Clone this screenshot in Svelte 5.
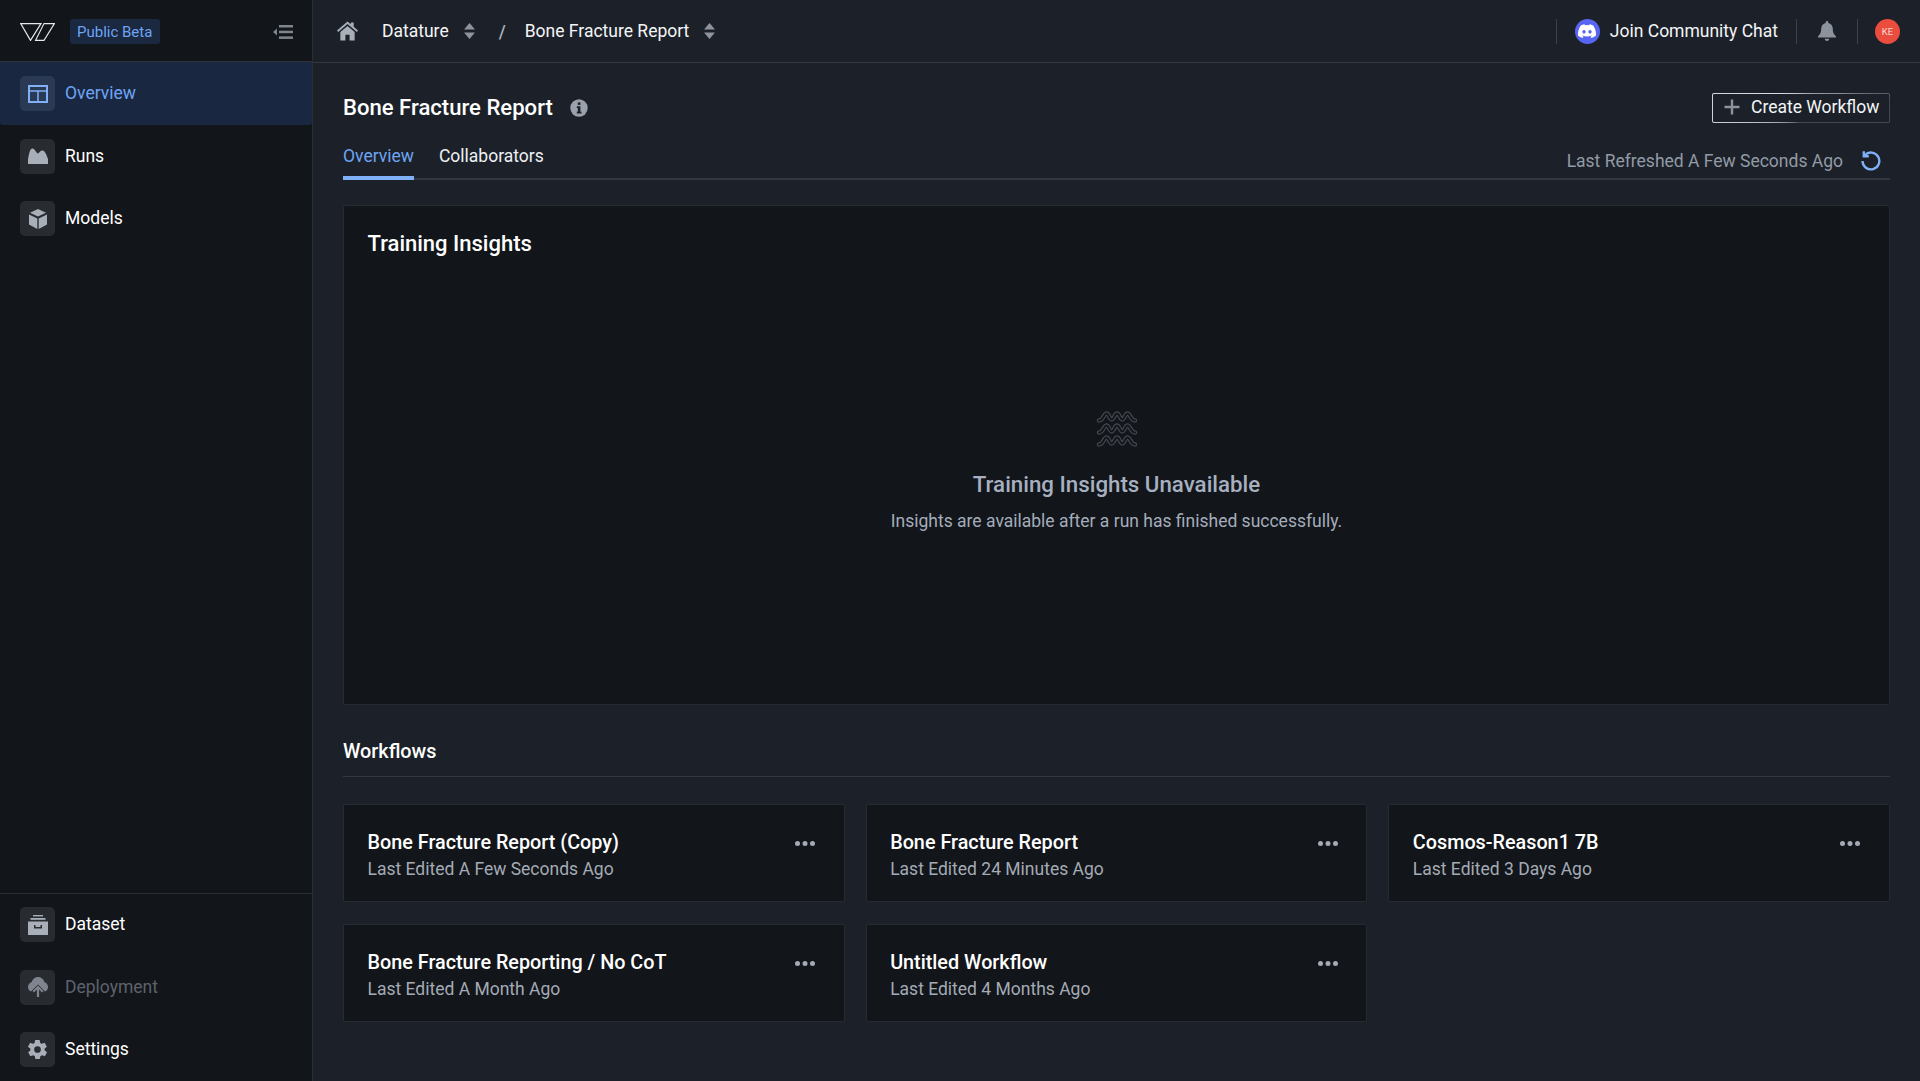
<script>
  const workflows = [
    { name: 'Bone Fracture Report (Copy)', edited: 'Last Edited A Few Seconds Ago' },
    { name: 'Bone Fracture Report', edited: 'Last Edited 24 Minutes Ago' },
    { name: 'Cosmos-Reason1 7B', edited: 'Last Edited 3 Days Ago' },
    { name: 'Bone Fracture Reporting / No CoT', edited: 'Last Edited A Month Ago' },
    { name: 'Untitled Workflow', edited: 'Last Edited 4 Months Ago' }
  ];
  const wave = 'M3 9.5C7 9.5 8 2.500 10.500 2.500C13 2.500 13.500 8.500 15.750 8.500C18 8.500 18.500 2.500 21 2.500C23.500 2.500 24 8.500 26.250 8.500C28.500 8.500 29 2.500 31.500 2.500C34 2.500 35 9.500 39 9.500';
</script>

<div class="page">
  <aside class="side">
    <div class="brand">
      <svg class="logo" viewBox="0 0 35 18" width="35" height="18" fill="none" stroke="#e6e8ec" stroke-width="1.2">
        <path d="M.7 .6H21L10.500 17.400z" />
        <path d="M24 .6H34.400L24 17.400H15.500z" stroke-width="1.1"/>
      </svg>
      <span class="beta">Public Beta</span>
      <svg class="collapse" viewBox="0 0 20 16" width="20" height="16" fill="#7f858e">
        <rect x="6" y="1" width="14" height="2.500" />
        <rect x="6" y="6.700" width="14" height="2.500" />
        <rect x="6" y="12.400" width="14" height="2.500" />
        <path d="M0 8l4-3.500v7z" />
      </svg>
    </div>
    <nav class="nav">
      <div class="item active">
        <span class="ico">
          <svg viewBox="0 0 20 18" width="20" height="18" fill="none" stroke="#7fb0f8" stroke-width="2">
            <rect x="1" y="1" width="18" height="16" />
            <path d="M1 6h18M10 6v11" stroke-width="1.500" />
          </svg>
        </span>
        <span class="label">Overview</span>
      </div>
      <div class="item">
        <span class="ico">
          <svg viewBox="0 0 20 16" width="20" height="16" fill="#a9afb9">
            <path d="M0 16V11C1 7 1.500 .5 4.500 .5c2.500 0 3.500 4.500 5.500 5 1.500-.5 2-3 4.500-3 2.500 0 4 4.500 5.500 8.500v5z" />
          </svg>
        </span>
        <span class="label">Runs</span>
      </div>
      <div class="item">
        <span class="ico">
          <svg viewBox="0 0 18 20" width="18" height="20" fill="#a9afb9">
            <path d="M9 0l8 3.800-8 3.800-8-3.800z" />
            <path d="M0 5.500l8.300 3.900V20L0 15.500z" />
            <path d="M18 5.500L9.700 9.400V20l8.300-4.500z" />
          </svg>
        </span>
        <span class="label">Models</span>
      </div>
    </nav>
    <div class="nav bottom">
      <div class="item">
        <span class="ico">
          <svg viewBox="0 0 20 20" width="20" height="20" fill="#a9afb9">
            <rect x="5" y="0" width="10" height="1.400" />
            <rect x="2.500" y="3" width="15" height="1.800" />
            <path d="M0 6.500h20V20H0zM6 10v3.500h8V10h-1.500v2h-5v-2z" fill-rule="evenodd" />
          </svg>
        </span>
        <span class="label">Dataset</span>
      </div>
      <div class="item disabled">
        <span class="ico">
          <svg viewBox="0 0 20 20" width="20" height="20" fill="#7f858e">
            <path d="M3 14.500C1 13.500 0 12 0 10c0-2.500 1.800-4.300 3.500-4.700C4.500 2 7 0 10 0s5.500 2 6.500 5.300C18.200 5.700 20 7.500 20 10c0 2-1 3.500-3 4.500l-7-7z" />
            <path d="M8.900 20v-7.500l-3 3-1.400-1.400L10 8.600l5.500 5.500-1.400 1.400-3-3V20z" />
          </svg>
        </span>
        <span class="label">Deployment</span>
      </div>
      <div class="item">
        <span class="ico">
          <svg viewBox="0 0 24 24" width="23" height="23" fill="#a9afb9">
            <path fill-rule="evenodd" d="M19.400 13c.1-.3.100-.7.100-1s0-.7-.1-1l2.100-1.600c.2-.2.200-.4.100-.6l-2-3.500c-.1-.2-.4-.3-.6-.2l-2.500 1c-.5-.4-1.100-.7-1.700-1l-.4-2.600c0-.3-.2-.5-.5-.5h-4c-.3 0-.5.200-.5.500l-.4 2.600c-.6.300-1.200.6-1.700 1l-2.500-1c-.2-.1-.5 0-.6.200l-2 3.500c-.1.200-.1.500.1.600L4.600 11c-.1.300-.1.700-.1 1s0 .7.100 1l-2.100 1.600c-.2.200-.2.400-.1.600l2 3.500c.1.200.4.300.6.200l2.500-1c.5.400 1.100.7 1.700 1l.4 2.600c0 .3.200.5.500.5h4c.3 0 .5-.2.500-.5l.4-2.600c.6-.3 1.200-.6 1.700-1l2.500 1c.2.100.5 0 .6-.2l2-3.500c.1-.2.100-.5-.1-.6zM12 15.500a3.500 3.500 0 1 1 0-7 3.500 3.500 0 0 1 0 7z" />
          </svg>
        </span>
        <span class="label">Settings</span>
      </div>
    </div>
  </aside>

  <div class="right">
    <header class="top">
      <svg class="home" viewBox="0 0 22 20" width="21" height="20" fill="#a9afb9">
        <path d="M11 0l3.500 3V1h3v4.600L22 9.500 20.800 11 11 2.600 1.200 11 0 9.500z" />
        <path d="M3.500 11L11 4.700l7.500 6.300v9h-5.300v-6H8.800v6H3.500z" />
      </svg>
      <span class="crumb crumb-first">Datature</span>
      <svg class="updown" viewBox="0 0 11 16" width="11" height="16" fill="#8d939d"><path d="M5.500 0L11 6.500H0zM5.500 16L0 9.500h11z" /></svg>
      <span class="slash">/</span>
      <span class="crumb">Bone Fracture Report</span>
      <svg class="updown" viewBox="0 0 11 16" width="11" height="16" fill="#8d939d"><path d="M5.500 0L11 6.500H0zM5.500 16L0 9.500h11z" /></svg>
      <span class="spacer"></span>
      <span class="vsep"></span>
      <span class="discord">
        <svg viewBox="0 0 24 18" width="18" height="14" fill="#fff">
          <path fill-rule="evenodd" d="M20.300 1.500A19.800 19.800 0 0 0 15.400 0l-.6 1.300a18.400 18.400 0 0 0-5.500 0L8.600 0a19.700 19.700 0 0 0-4.900 1.500C.6 6.200-.3 10.700.1 15.200A20 20 0 0 0 6.200 18.200l1.200-2c-.7-.2-1.300-.5-1.900-.9l.5-.4a14.200 14.200 0 0 0 12 0l.5.400c-.6.400-1.300.7-1.900.9l1.200 2a20 20 0 0 0 6.100-3c.5-5.200-.9-9.700-3.600-13.700zM8 12.400c-1.200 0-2.200-1.100-2.200-2.400S6.800 7.600 8 7.600s2.200 1.100 2.200 2.400-1 2.400-2.200 2.400zm8 0c-1.200 0-2.200-1.100-2.200-2.400s1-2.400 2.200-2.400 2.200 1.100 2.200 2.400-1 2.400-2.200 2.400z" />
        </svg>
      </span>
      <span class="crumb join">Join Community Chat</span>
      <span class="vsep"></span>
      <svg class="bell" viewBox="0 0 18 20" width="18" height="20" fill="#8d939d">
        <path d="M9 0c.8 0 1.300.6 1.300 1.300v.7c2.800.6 4.500 3 4.500 5.800 0 4 1 5.400 3.200 7.600v1H0v-1c2.200-2.200 3.200-3.600 3.200-7.600C3.200 5 4.900 2.600 7.700 2v-.7C7.700.6 8.200 0 9 0z" />
        <path d="M6.700 17.800h4.600c0 1.200-1 2.200-2.300 2.200s-2.300-1-2.300-2.200z" />
      </svg>
      <span class="vsep"></span>
      <span class="avatar">KE</span>
    </header>

    <main class="main">
      <div class="title-row">
        <h1>Bone Fracture Report</h1>
        <svg class="info" viewBox="0 0 18 18" width="18" height="18">
          <circle cx="9" cy="9" r="8.700" fill="#9aa1ac" />
          <rect x="7.800" y="3.400" width="2.600" height="2.500" fill="#1c2129" />
          <path d="M6.800 7.300h3.600v5.400h1.100v1.700H6.800v-1.700h1v-3.700h-1z" fill="#1c2129" />
        </svg>
        <span class="spacer"></span>
        <button class="create">
          <svg viewBox="0 0 16 16" width="16" height="16" stroke="#8d939d" stroke-width="2.400"><path d="M8 .500v15M.500 8h15" /></svg>
          Create Workflow
        </button>
      </div>

      <div class="tabs">
        <span class="tab current">Overview</span>
        <span class="tab">Collaborators</span>
        <span class="spacer"></span>
        <span class="refreshed">Last Refreshed A Few Seconds Ago</span>
        <svg class="refresh" viewBox="0 0 20 20" width="20" height="20" fill="none" stroke="#7fb0f8" stroke-width="2.400">
          <path d="M3.800 4.200A8.400 8.400 0 1 1 1.500 10" />
          <path d="M2.800 .3v5h5" />
        </svg>
      </div>

      <section class="insights">
        <h2>Training Insights</h2>
        <div class="empty">
          <svg viewBox="0 0 42 36" width="42" height="36" fill="none" stroke-linecap="round">
            {#each [0, 12, 24] as y}
              <g transform="translate(0 {y})">
                <path d={wave} stroke="#434850" stroke-width="4.400" />
                <path d={wave} stroke="#12151a" stroke-width="2" />
              </g>
            {/each}
          </svg>
          <h3>Training Insights Unavailable</h3>
          <p>Insights are available after a run has finished successfully.</p>
        </div>
      </section>

      <h4>Workflows</h4>
      <div class="grid">
        {#each workflows as w}
          <article class="wf">
            <div class="wf-text">
              <strong>{w.name}</strong>
              <span>{w.edited}</span>
            </div>
            <svg class="dots" viewBox="0 0 20 5" width="20" height="5" fill="#a4aab4">
              <circle cx="2.500" cy="2.500" r="2.500" /><circle cx="10" cy="2.500" r="2.500" /><circle cx="17.500" cy="2.500" r="2.500" />
            </svg>
          </article>
        {/each}
      </div>
    </main>
  </div>
</div>

<style>
  :global(body) {
    margin: 0;
    background: #1c2129;
    font-family: Roboto, "Liberation Sans", sans-serif;
  }
  .page {
    display: flex;
    width: 1920px;
    height: 1081px;
    overflow: hidden;
    color: #fff;
    background: #1c2129;
  }
  .side {
    width: 312px;
    flex: none;
    background: #12151a;
    border-right: 1px solid #2a2e35;
    display: flex;
    flex-direction: column;
  }
  .brand {
    height: 61px;
    flex: none;
    display: flex;
    align-items: center;
    border-bottom: 1px solid #30343a;
    padding: 0 19px 0 20px;
  }
  .logo { margin-top: 2px; }
  .beta {
    margin: 2px 0 0 15px;
    height: 25px;
    padding: 0 8px 0 7px;
    display: flex;
    align-items: center;
    font-size: 15px;
    color: #6ea4f4;
    background: #1a2840;
    border-radius: 3px;
  }
  .collapse { margin-left: auto; margin-top: 3px; }
  .nav { display: flex; flex-direction: column; }
  .item {
    height: 62.500px;
    display: flex;
    align-items: center;
    gap: 10px;
    padding-left: 20px;
    font-size: 17.500px;
    color: #fff;
  }
  .label { margin-bottom: 1px; }
  .active {
    height: 63px;
    background: #192840;
    color: #6ea4f4;
    border-radius: 0 0 3px 3px;
  }
  .disabled { color: #5d636c; }
  .ico {
    width: 35px;
    height: 35px;
    display: flex;
    align-items: center;
    justify-content: center;
    border-radius: 5px;
    background: #282c31;
  }
  .active .ico { background: #2a3a54; }
  .bottom {
    margin-top: auto;
    border-top: 1px solid #2a2e35;
  }
  .right { flex: 1; min-width: 0; display: flex; flex-direction: column; }
  .top {
    height: 63px;
    flex: none;
    box-sizing: border-box;
    border-bottom: 1px solid #34383e;
    display: flex;
    align-items: center;
    padding: 0 20px 0 24px;
  }
  .home { margin-right: 24px; }
  .crumb { font-size: 17.500px; color: #f4f5f7; }
  .updown { margin-left: 15px; }
  .slash { margin: 0 19px 0 24px; font-size: 18px; font-weight: 500; color: #a9afb9; }
  .spacer { flex: 1; }
  .vsep { width: 1px; height: 25px; background: #3e4248; }
  .discord {
    width: 25px;
    height: 25px;
    margin: 0 10px 0 18px;
    border-radius: 50%;
    background: #5865f2;
    display: flex;
    align-items: center;
    justify-content: center;
  }
  .join { margin-right: 18px; }
  .bell { margin: 0 21px 0 21px; }
  .avatar {
    width: 25px;
    height: 25px;
    margin-left: 17px;
    border-radius: 50%;
    background: #ea4c3e;
    color: #f8d8d4;
    font-size: 9.500px;
    display: flex;
    align-items: center;
    justify-content: center;
  }
  .main { padding: 0 30px; flex: 1; min-width: 0; }
  .title-row {
    display: flex;
    align-items: center;
    height: 78px;
    padding-top: 10px;
    box-sizing: border-box;
  }
  h1 { margin: 0; font-size: 22.100px; font-weight: 500; color: #fff; }
  .info { margin-left: 17px; margin-top: 2px; }
  .create {
    height: 30px;
    width: 178px;
    padding: 0 0 2px 11px;
    display: flex;
    align-items: center;
    gap: 11px;
    font: inherit;
    font-size: 17.500px;
    color: #f4f5f7;
    background:
      linear-gradient(#1c2129, #1c2129) padding-box,
      conic-gradient(from 0deg, #b9bbbf 0deg, #8a8d92 70deg, #44484e 85deg, #44484e 185deg, #d0d2d5 262deg, #dadcdf 300deg, #b9bbbf 360deg) border-box;
    border: 1px solid transparent;
    border-radius: 2px;
    box-sizing: border-box;
    margin-top: 2px;
  }
  .tabs {
    display: flex;
    align-items: flex-start;
    height: 39px;
    box-sizing: border-box;
    border-bottom: 2px solid #34383e;
  }
  .tab {
    font-size: 17.500px;
    line-height: 20px;
    color: #eef0f3;
    margin-right: 25px;
    height: 39px;
    box-sizing: border-box;
    padding-top: 5px;
  }
  .current { color: #6ea4f4; border-bottom: 4px solid #7fb0f8; }
  .refreshed { font-size: 17.500px; line-height: 22px; color: #929aa6; margin-top: 9px; }
  .refresh { margin: 10px 9px 0 18px; }
  .insights {
    margin-top: 25px;
    height: 500px;
    box-sizing: border-box;
    background: #12151a;
    border: 1px solid #272b31;
    border-radius: 2px;
    padding: 25px 23.500px 0;
    display: flex;
    flex-direction: column;
  }
  h2 { margin: 0; font-size: 22px; font-weight: 500; line-height: 26px; color: #fff; }
  .empty {
    flex: 1;
    display: flex;
    flex-direction: column;
    align-items: center;
    padding-top: 154px;
  }
  h3 { margin: 23px 0 0; font-size: 22.300px; font-weight: 500; line-height: 28px; color: #a7b0c0; }
  p { margin: 12px 0 0; font-size: 17.500px; color: #a4adbb; line-height: 22px; }
  h4 {
    margin: 33px 0 0;
    padding-top: 1px;
    height: 37px;
    border-bottom: 1px solid #34383e;
    font-size: 19.800px;
    font-weight: 500;
    line-height: 26px;
    color: #fff;
  }
  .grid {
    margin-top: 27px;
    display: grid;
    grid-template-columns: repeat(3, 1fr);
    gap: 22px 21px;
  }
  .wf {
    height: 98px;
    box-sizing: border-box;
    background: #12151a;
    border: 1px solid #272b31;
    border-radius: 2px;
    padding: 25px 23.500px 0;
    display: flex;
    justify-content: space-between;
    align-items: flex-start;
  }
  .wf-text { display: flex; flex-direction: column; }
  .wf strong { font-size: 19.800px; font-weight: 500; line-height: 26px; color: #fff; }
  .wf span { font-size: 17.500px; line-height: 26px; color: #a4abb5; }
  .dots { margin-top: 11px; margin-right: 5px; }
</style>
